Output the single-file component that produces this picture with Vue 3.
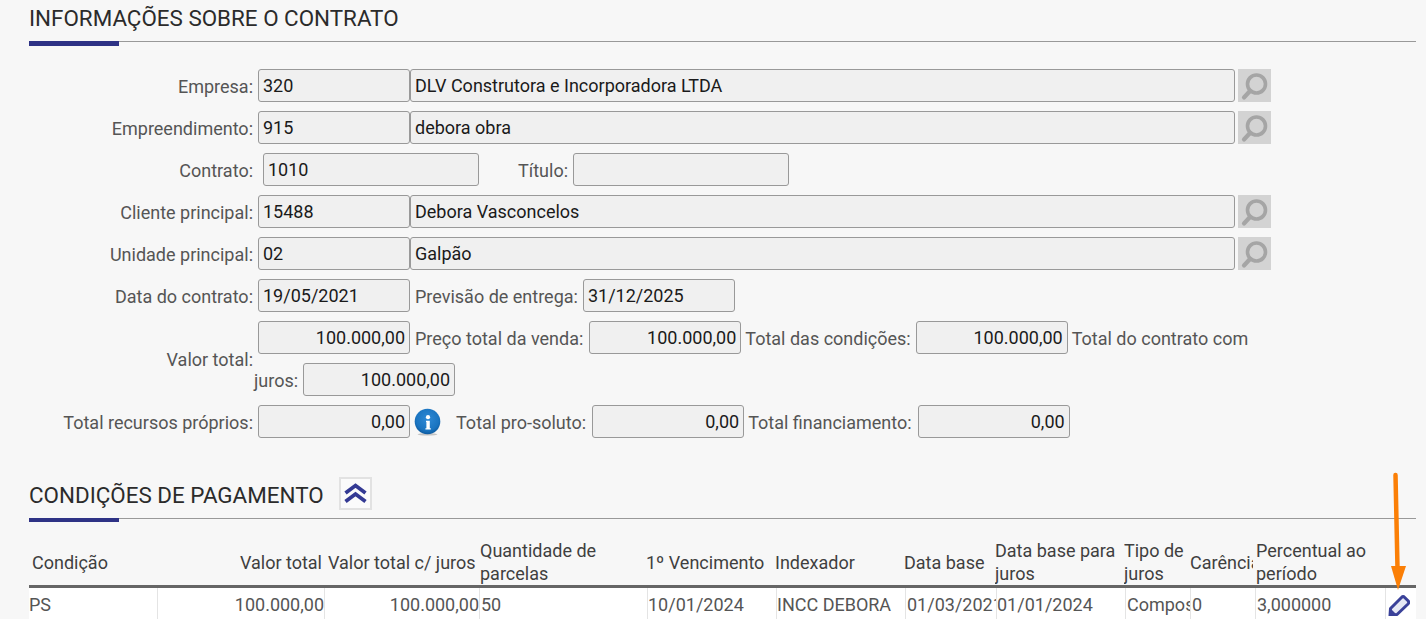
<script setup>
const headers = ['Condição', 'Valor total', 'Valor total c/ juros', 'Quantidade de parcelas', '1º Vencimento', 'Indexador', 'Data base', 'Data base para juros', 'Tipo de juros', 'Carência', 'Percentual ao período', '']
const cells = ['PS', '100.000,00', '100.000,00', '50', '10/01/2024', 'INCC DEBORA', '01/03/2021', '01/01/2024', 'Composto', '0', '3,000000']
</script>

<template>
  <div class="page">
    <h2 class="title first-title">INFORMAÇÕES SOBRE O CONTRATO</h2>

    <div class="form">
      <div class="row">
        <label class="lbl">Empresa:</label>
        <span class="inp w152">320</span>
        <span class="inp w825 tight">DLV Construtora e Incorporadora LTDA</span>
        <span class="search"><svg viewBox="0 0 33 33" width="33" height="33"><circle cx="18.500" cy="15" r="9" fill="none" stroke="#a5a5a5" stroke-width="3.600"/><path d="M12 22 6 28.500" stroke="#a5a5a5" stroke-width="4.200" stroke-linecap="round"/></svg></span>
      </div>
      <div class="row">
        <label class="lbl">Empreendimento:</label>
        <span class="inp w152">915</span>
        <span class="inp w825 tight">debora obra</span>
        <span class="search"><svg viewBox="0 0 33 33" width="33" height="33"><circle cx="18.500" cy="15" r="9" fill="none" stroke="#a5a5a5" stroke-width="3.600"/><path d="M12 22 6 28.500" stroke="#a5a5a5" stroke-width="4.200" stroke-linecap="round"/></svg></span>
      </div>
      <div class="row">
        <label class="lbl">Contrato:</label>
        <span class="inp w216 ml9">1010</span>
        <label class="lbl2 titulo">Título:</label>
        <span class="inp w216 ml5"></span>
      </div>
      <div class="row">
        <label class="lbl">Cliente principal:</label>
        <span class="inp w152">15488</span>
        <span class="inp w825 tight">Debora Vasconcelos</span>
        <span class="search"><svg viewBox="0 0 33 33" width="33" height="33"><circle cx="18.500" cy="15" r="9" fill="none" stroke="#a5a5a5" stroke-width="3.600"/><path d="M12 22 6 28.500" stroke="#a5a5a5" stroke-width="4.200" stroke-linecap="round"/></svg></span>
      </div>
      <div class="row">
        <label class="lbl">Unidade principal:</label>
        <span class="inp w152">02</span>
        <span class="inp w825 tight">Galpão</span>
        <span class="search"><svg viewBox="0 0 33 33" width="33" height="33"><circle cx="18.500" cy="15" r="9" fill="none" stroke="#a5a5a5" stroke-width="3.600"/><path d="M12 22 6 28.500" stroke="#a5a5a5" stroke-width="4.200" stroke-linecap="round"/></svg></span>
      </div>
      <div class="row">
        <label class="lbl">Data do contrato:</label>
        <span class="inp w152">19/05/2021</span>
        <label class="lbl2">Previsão de entrega:</label>
        <span class="inp w152 ml5">31/12/2025</span>
      </div>
      <div class="row tall">
        <label class="lbl">Valor total:</label>
        <div class="flow">
          <span class="inp w152 num ml4 gapb">100.000,00</span>
          <span class="txt">Preço total da venda:</span>
          <span class="inp w152 num ml6 gapb">100.000,00</span>
          <span class="txt tl">Total das condições:</span>
          <span class="inp w152 num ml5 gapb">100.000,00</span>
          <span class="txt tl">Total do contrato com juros:</span>
          <span class="inp w152 num ml5 gapb">100.000,00</span>
        </div>
      </div>
      <div class="row">
        <label class="lbl">Total recursos próprios:</label>
        <span class="inp w152 num">0,00</span>
        <svg class="info" viewBox="0 0 28 28" width="28" height="28">
          <defs>
            <radialGradient id="ig" cx="0.5" cy="0.4" r="0.6">
              <stop offset="0" stop-color="#2f8ad6"/>
              <stop offset="0.75" stop-color="#1a74c0"/>
              <stop offset="1" stop-color="#0e5a9f"/>
            </radialGradient>
          </defs>
          <ellipse cx="13.500" cy="26.300" rx="10" ry="1.300" fill="#c4c4c4"/>
          <circle cx="13.500" cy="13.500" r="12.800" fill="url(#ig)"/>
          <circle cx="14" cy="9.200" r="2.100" fill="#fff"/>
          <path d="M12 12.800h3.800v7.400h1v1.300h-5.400v-1.300h1v-6.100h-.4z" fill="#fff"/>
        </svg>
        <label class="lbl2 ml-a">Total pro-soluto:</label>
        <span class="inp w152 num ml6">0,00</span>
        <label class="lbl2 tl">Total financiamento:</label>
        <span class="inp w152 num ml6">0,00</span>
      </div>
    </div>

    <div class="title-row">
      <h2 class="title-text">CONDIÇÕES DE PAGAMENTO</h2>
      <span class="collapse">
        <svg viewBox="0 0 29 29" width="29" height="29"><path d="M4.500 14 14.500 6.500 24.500 14M4.500 22.500 14.500 15 24.500 22.500" fill="none" stroke="#343a94" stroke-width="3.800"/></svg>
      </span>
    </div>

    <div class="thead">
      <div v-for="(h, i) in headers" :key="i" class="th" :class="'h' + i">{{ h }}</div>
    </div>
    <div class="tbody">
      <div v-for="(c, i) in cells" :key="i" class="td" :class="'d' + i">{{ c }}</div>
      <div class="td edit">
        <svg viewBox="0 0 22 22" width="22" height="22"><path d="M2.500 14.500 13.500 3.500c1-1 2.200-1 3.200 0l3.300 3.300c1 1 1 2.200 0 3.200L9 20.500l-7 1z" fill="#e6e8f4" stroke="#3a4199" stroke-width="3" stroke-linejoin="round"/><path d="M1 21.800 2 14 9 21z" fill="#3a4199"/></svg>
      </div>
    </div>

    <svg class="arrow" viewBox="0 0 20 120" width="20" height="120">
      <path d="M8.500 3 L10.500 96" stroke="#fb7f06" stroke-width="4.500" stroke-linecap="round"/>
      <path d="M4 94 H19 L11 118z" fill="#fb7f06"/>
    </svg>
  </div>
</template>

<style scoped>
.page {
  position: relative;
  width: 1426px;
  height: 619px;
  overflow: hidden;
  background: #f7f7f7;
  padding: 0 10px 0 29px;
  box-sizing: border-box;
  font-family: Roboto, sans-serif;
  font-size: 18px;
  color: #555;
}
.title, .title-text {
  margin: 0;
  font-weight: 400;
  font-size: 22.4px;
  line-height: 26px;
  color: #2b2b2b;
}
.first-title {
  position: relative;
  height: 36px;
  padding-top: 5px;
  border-bottom: 1px solid #999;
}
.first-title::after, .title-row::after {
  content: "";
  position: absolute;
  left: 0;
  bottom: -5px;
  width: 90px;
  height: 5px;
  background: #2e3285;
}
.form {
  padding-top: 27px;
  margin-left: -29px;
}
.row {
  display: flex;
  align-items: center;
  height: 33px;
  margin-bottom: 9px;
}
.row.tall {
  height: 75px;
}
.lbl {
  width: 253px;
  margin-right: 1px;
  padding-top: 2px;
  text-align: right;
  flex: none;
  white-space: nowrap;
}
.lbl2, .txt {
  margin-left: 5px;
  white-space: nowrap;
}
.lbl2 { padding-top: 2px; }
.inp {
  display: inline-block;
  height: 33px;
  line-height: 32px;
  box-sizing: border-box;
  border: 1px solid #999;
  border-radius: 3px;
  background: #f0f0f0;
  color: #1a1a1a;
  padding: 0 4px;
  margin-left: 4px;
  flex: none;
  white-space: nowrap;
  vertical-align: top;
}
.w152 { width: 152px; }
.w216 { width: 216px; }
.w825 { width: 825px; }
.tight { margin-left: 0; }
.ml9 { margin-left: 9px; }
.ml6 { margin-left: 6px; }
.ml5 { margin-left: 5px; }
.ml4 { margin-left: 4px; }
.titulo { margin-left: 39px; }
.ml-a { margin-left: 14px; }
.num { text-align: right; }
.gapb { margin-bottom: 9px; }
.search {
  display: inline-flex;
  flex: none;
  width: 33px;
  height: 33px;
  margin-left: 3px;
  background: #d3d3d3;
}
.info { margin-left: 4px; flex: none; }
.flow {
  width: 1010px;
  height: 75px;
  line-height: 35px;
  flex: none;
}
.txt { white-space: normal; }
.tl { margin-left: 4px; }
.title-row {
  position: relative;
  display: flex;
  align-items: flex-start;
  gap: 15px;
  margin-top: 39px;
  height: 41px;
  border-bottom: 1px solid #999;
}
.title-row::after { bottom: -4px; height: 4px; }
.title-text { margin-top: 5px; }
.collapse {
  display: inline-flex;
  align-items: center;
  justify-content: center;
  width: 33px;
  height: 33px;
  box-sizing: border-box;
  border: 2px solid #e2e2e2;
  background: #fbfbfb;
}
.thead, .tbody {
  display: grid;
  width: 1387px;
}
.thead {
  grid-template-columns: 128px 167px 156px 166px 129px 129px 91px 129px 66px 66px 129px 31px;
  margin-top: 20px;
  height: 46px;
  line-height: 23px;
  align-items: center;
  border-bottom: 3px solid #666;
  color: #3f3f3f;
}
.th { overflow: hidden; }
.h0 { padding-left: 3px; }
.h1 { text-align: right; padding-right: 2px; }
.h2 { padding-left: 4px; white-space: nowrap; }
.h4, .h5, .h6 { white-space: nowrap; }
.h9 { white-space: nowrap; width: 63px; }
.tbody {
  grid-template-columns: 128px 167px 155px 168px 129px 129px 91px 129px 65px 65px 130px 31px;
  height: 40px;
  background: #fff;
  line-height: 34px;
  color: #555;
}
.td {
  overflow: hidden;
  white-space: nowrap;
  box-sizing: border-box;
  border-left: 1px solid #e4e4e4;
  padding-left: 1px;
}
.d0 { border-left: 0; padding-left: 0; }
.d1, .d2 { text-align: right; padding-left: 0; }
.d4, .d5, .d7 { padding-left: 0; }
.d3, .d9, .d10 { padding-left: 1px; }
.edit { padding: 6px 0 0 2px; line-height: 0; }
.edit svg { display: block; }
.arrow {
  position: absolute;
  left: 1387px;
  top: 472px;
}
</style>

<style>
html, body { margin: 0; background: #f7f7f7; }
</style>
